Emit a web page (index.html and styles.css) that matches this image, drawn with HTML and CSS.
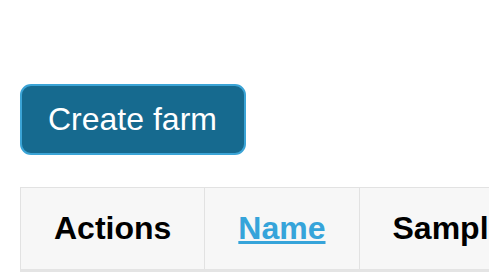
FILE: index.html
```html
<!DOCTYPE html>
<html lang="en">
<head>
  <meta charset="UTF-8"/>
  <title>Farms</title>
  <link rel="stylesheet" href="styles.css">
</head>
<body>
  <div class="page">
    <div class="toolbar">
      <button class="btn-create">Create farm</button>
    </div>

    <div class="table-wrap">
      <table class="farms">
        <thead>
          <tr>
            <th>Actions</th>
            <th><a href="#">Name</a></th>
            <th>Samples</th>
            <th>Location</th>
          </tr>
        </thead>
      </table>
    </div>
  </div>
</body>
</html>
```
FILE: styles.css
```css
body {
  margin: 0;
  font-family: 'Liberation Sans', Arial, sans-serif;
  background: white;
  overflow: hidden;
}

.page {
  padding: 84px 0 0 20px;
}

.toolbar {
  margin-bottom: 32px;
}

.btn-create {
  font-family: inherit;
  font-size: 32px;
  line-height: 37px;
  color: white;
  background-color: #166a8f;
  border: 2px solid #3ba4d6;
  border-radius: 11px;
  padding: 15px 27px 15px 26px;
  cursor: pointer;
}

.table-wrap {
  overflow: hidden;
}

.farms {
  border-collapse: collapse;
  white-space: nowrap;
}

.farms th {
  background-color: #f7f7f7;
  border: 1px solid #e2e2e2;
  border-bottom: 3px solid #e4e4e4;
  padding: 22px 33px;
  font-size: 32px;
  line-height: 37px;
  font-weight: bold;
  color: black;
  text-align: left;
}

.farms th a {
  color: #36a4da;
  text-decoration: underline;
}
```
